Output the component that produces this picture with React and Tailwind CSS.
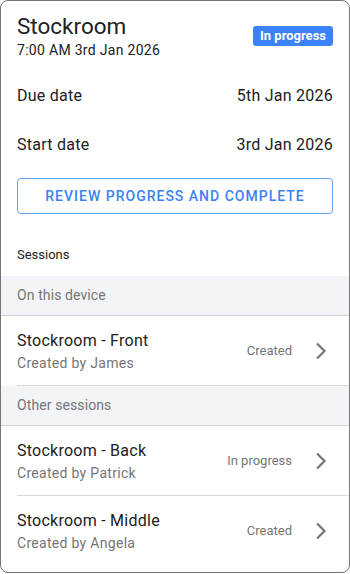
import React from "react";

function Chevron() {
  return (
    <svg width="12" height="20" viewBox="0 0 12 20" className="text-[#757575]">
      <path d="M2 2.5l7.5 7.5L2 17.5" fill="none" stroke="currentColor" strokeWidth="2.2" />
    </svg>
  );
}

function Row({ title, by, status, last }) {
  return (
    <div className="relative h-[70px] flex items-center pl-4 pr-[22px]">
      <div className="flex-1 flex flex-col">
        <div className="text-[16px] leading-[24px] text-[#212121] tracking-[0.25px]">{title}</div>
        <div className="text-[14px] leading-[20px] text-[#757575] tracking-[0.3px]">{by}</div>
      </div>
      <div className="text-[13px] text-[#757575] mr-[23px]">{status}</div>
      <Chevron />
      {!last && <div className="absolute left-4 right-0 bottom-0 h-px bg-[#d9d9d9]" />}
    </div>
  );
}

function Header({ children }) {
  return (
    <div className="h-10 flex items-center px-4 bg-[#f3f4f7] border-b border-[#cfcfcf] text-[14px] text-[#757575] tracking-[0.1px]">
      {children}
    </div>
  );
}

export default function App() {
  return (
    <div className="w-[350px] h-[574px] bg-white" style={{ fontFamily: "Roboto, sans-serif" }}>
      <div className="h-[573px] border border-[#757575] rounded-[8px] overflow-hidden flex flex-col">
        <div className="px-4 pt-[10px] flex justify-between items-start">
          <div>
            <div className="text-[22.5px] leading-[30px] text-[#212121]">Stockroom</div>
            <div className="text-[14px] leading-[18px] text-[#212121] tracking-[0.3px]">7:00 AM 3rd Jan 2026</div>
          </div>
          <div className="mt-[15px] h-5 px-[7px] rounded-[3px] bg-[#3b82f6] text-white text-[13px] font-bold leading-5">
            In progress
          </div>
        </div>
        <div className="mt-[25px] px-4 flex justify-between text-[16px] leading-[24px] text-[#212121] tracking-[0.25px]">
          <span>Due date</span>
          <span>5th Jan 2026</span>
        </div>
        <div className="mt-[25px] px-4 flex justify-between text-[16px] leading-[24px] text-[#212121] tracking-[0.25px]">
          <span>Start date</span>
          <span>3rd Jan 2026</span>
        </div>
        <div className="px-4 mt-[21px]">
          <div className="h-[36px] border border-[#6a9ff5] rounded-[4px] flex items-center justify-center text-[#3b82f6] text-[14px] font-medium tracking-[1px]">
            REVIEW PROGRESS AND COMPLETE
          </div>
        </div>
        <div className="px-4 h-[62px] pt-[32px] leading-[18px] text-[13px] text-[#212121]">Sessions</div>
        <Header>On this device</Header>
        <Row title="Stockroom - Front" by="Created by James" status="Created" />
        <Header>Other sessions</Header>
        <Row title="Stockroom - Back" by="Created by Patrick" status="In progress" />
        <Row title="Stockroom - Middle" by="Created by Angela" status="Created" last />
      </div>
    </div>
  );
}
